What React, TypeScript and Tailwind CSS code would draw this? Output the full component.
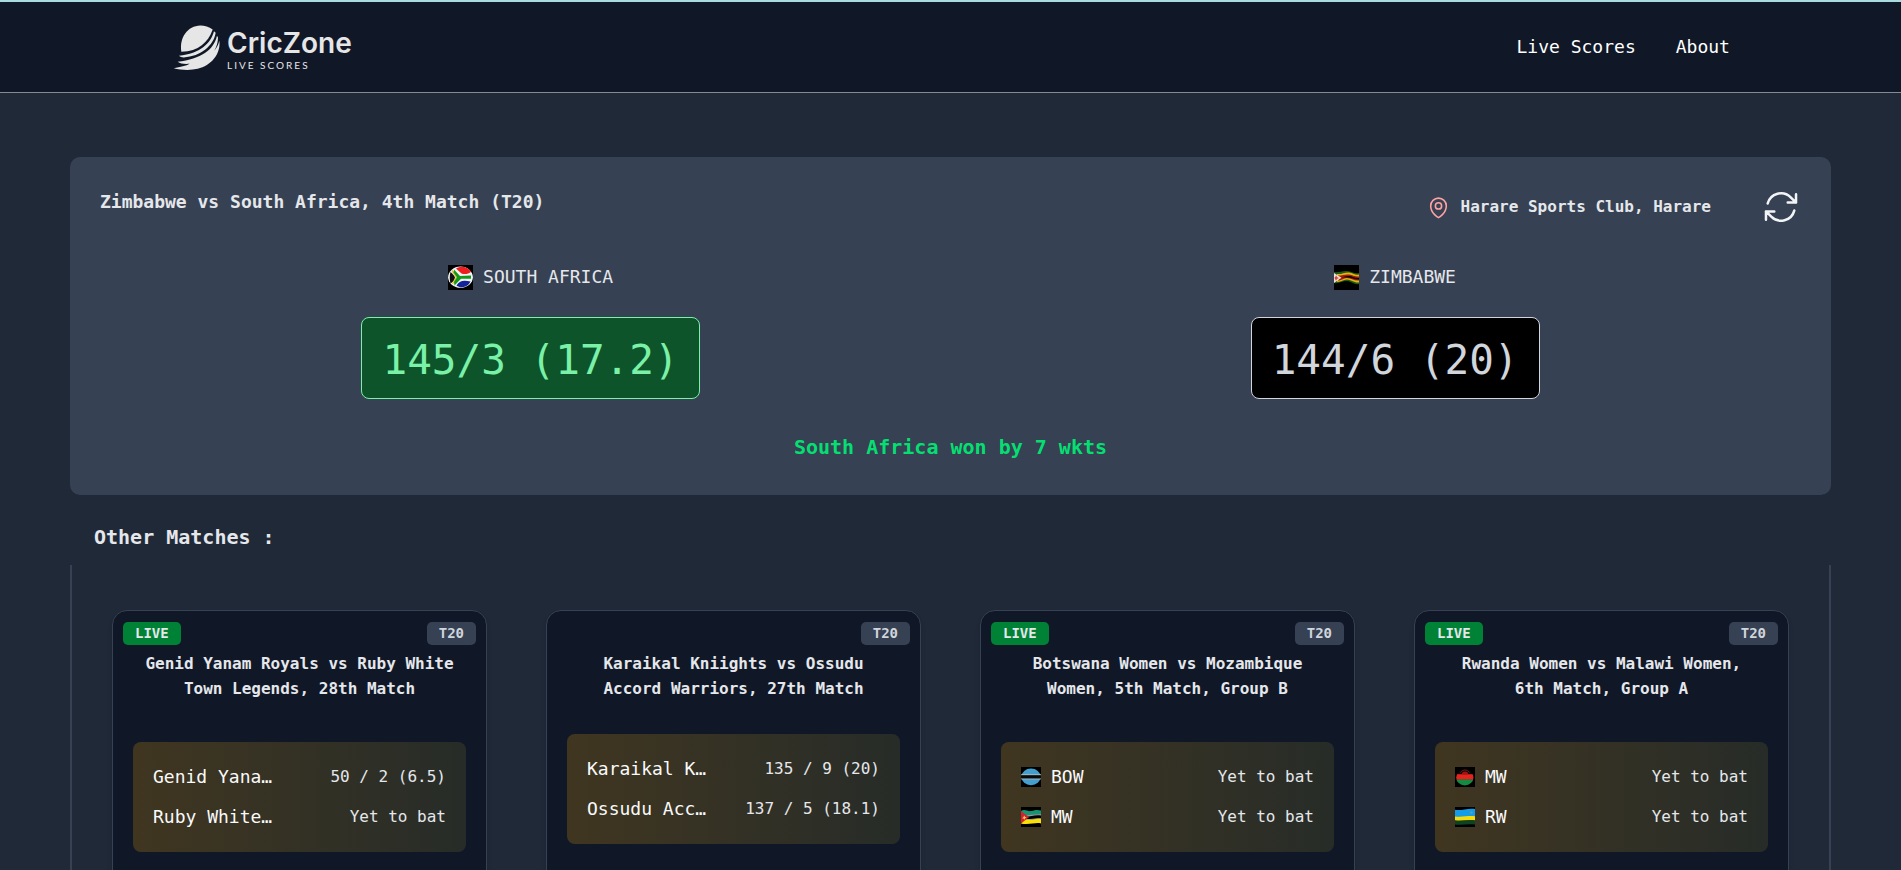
import type { ReactNode } from "react";

type FlagCode = "za" | "zw" | "bw" | "mz" | "mw" | "rw";

interface Side {
  name: string;
  score: string;
  flag?: FlagCode;
}

interface Match {
  title: string;
  format: string;
  live: boolean;
  sides: Side[];
}

const matches: Match[] = [
  {
    title: "Genid Yanam Royals vs Ruby White Town Legends, 28th Match",
    format: "T20",
    live: true,
    sides: [
      { name: "Genid Yana…", score: "50 / 2 (6.5)" },
      { name: "Ruby White…", score: "Yet to bat" },
    ],
  },
  {
    title: "Karaikal Kniights vs Ossudu Accord Warriors, 27th Match",
    format: "T20",
    live: false,
    sides: [
      { name: "Karaikal K…", score: "135 / 9 (20)" },
      { name: "Ossudu Acc…", score: "137 / 5 (18.1)" },
    ],
  },
  {
    title: "Botswana Women vs Mozambique Women, 5th Match, Group B",
    format: "T20",
    live: true,
    sides: [
      { name: "BOW", score: "Yet to bat", flag: "bw" },
      { name: "MW", score: "Yet to bat", flag: "mz" },
    ],
  },
  {
    title: "Rwanda Women vs Malawi Women, 6th Match, Group A",
    format: "T20",
    live: true,
    sides: [
      { name: "MW", score: "Yet to bat", flag: "mw" },
      { name: "RW", score: "Yet to bat", flag: "rw" },
    ],
  },
];

const flagArt: Record<FlagCode, ReactNode> = {
  za: (
    <>
      <clipPath id="za-ball">
        <ellipse cx="12.5" cy="12.2" rx="12.4" ry="10.6" />
      </clipPath>
      <g clipPath="url(#za-ball)">
        <rect width="25" height="25" fill="#f4f4f4" />
        <path d="M8 3.5 C13 0.5 20 1.5 23.5 6.5 C20 9.5 16 9.5 13.5 8.5 Z" fill="#f21d1d" />
        <path d="M8.5 20.5 C11 16 15 14.5 22.5 16.5 C20 22 13 24 8.5 20.5 Z" fill="#14239b" />
        <path d="M2.5 7 C5 9 6.5 11 7 12.5 C6.5 15 5 17 2.5 18.5 C1.5 15 1.5 10 2.5 7 Z" fill="#111" />
        <path d="M4 5.5 L8.5 12.3 L4.5 19" fill="none" stroke="#e8c220" strokeWidth="1.4" />
        <path d="M6 4.5 L12 11 L23 10.5 V13.8 L13 13.8 L6.5 20.5 L6 17 L9 12.3 L5.5 7.5 Z" fill="#139a1c" />
      </g>
    </>
  ),
  zw: (
    <>
      <path d="M0 7 C5 8 8 5.5 13 6 C18 6.5 20 9 25 8 V19 C20 20 18 16.5 13 16 C8 16 5 19 0 18 Z" fill="#1d5c17" />
      <path d="M3 9 C8 9.5 11 7 15 7.5 C19 8 21 10.5 25 9.5 V17.5 C20 18 17 14.5 13 14.5 C9 15 6 17 3 17 Z" fill="#e3b40c" />
      <path d="M4 10.5 C9 10.5 11 9 15 9.5 C19 10 21 12 25 11.5 V15.5 C20 16 17 13 13 13 C9 13.5 7 15.5 4 15.5 Z" fill="#a51a12" />
      <path d="M6 12 C10 12.5 12 10.5 16 11 C19 11.5 21 13.5 25 13 V14.5 C20 14.5 17 12.2 13 12.4 Z" fill="#0b0505" />
      <path d="M0 8 L7.5 12.8 L0 18 Z" fill="#eadfdb" />
      <path d="M0.5 13 L2.2 10.5 L3.2 12.3 L5 13 L3 14 L2 15.8 Z" fill="#d4483d" />
    </>
  ),
  bw: (
    <>
      <ellipse cx="12.5" cy="12.3" rx="12" ry="10.4" fill="#459fce" />
      <rect y="9.2" width="25" height="6.2" fill="#b9c6cc" />
      <rect y="10.2" width="25" height="4.2" fill="#0a0a0a" />
    </>
  ),
  mz: (
    <>
      <path d="M0 5 C5 2 8 6 13 5 C18 3.5 21 3 25 4.5 V10 C20 9 16 10 12 10.5 L0 10 Z" fill="#149474" />
      <path d="M2 9.5 C8 11.5 15 8.5 25 9.2 V10.6 C17 9.5 12 12 6 12 Z" fill="#9a9a9a" />
      <path d="M4 15.5 C12 17 18 13.5 25 15 V20.5 C18 19 12 22.5 0 20.8 Z" fill="#f8e008" />
      <path d="M4 14.8 C12 16 18 13 25 14.2 V15.2 C18 14.2 12 17 4 16.2 Z" fill="#b5b08a" />
      <path d="M0 5 L10 12.8 L0 20.5 Z" fill="#d6202b" />
      <path d="M4 10.5 L5 12.5 L7 13 L5.2 14.2 L4.6 16 L3.2 14.4 L1.4 14 L3 12.8 Z" fill="#f0d25a" />
    </>
  ),
  mw: (
    <>
      <clipPath id="mw-ball">
        <ellipse cx="12.3" cy="13" rx="10.8" ry="10" />
      </clipPath>
      <g clipPath="url(#mw-ball)">
        <rect width="25" height="10" fill="#0a0a0a" />
        <rect y="9" width="25" height="7" fill="#e8231d" />
        <rect y="15.6" width="25" height="9" fill="#158a43" />
      </g>
      <path d="M8.5 9.5 A4 4 0 0 1 16.5 9.5 Z" fill="#a01512" />
      <path d="M6.8 7 A6.5 6.5 0 0 1 18.2 7" fill="none" stroke="#7d1310" strokeWidth="1.2" />
    </>
  ),
  rw: (
    <>
      <path d="M0 3.5 C8 5 16 1 25 2.5 V12.5 C16 11.5 9 13.5 0 12.5 Z" fill="#149bea" />
      <path d="M0 11.8 C9 13 16 10.5 25 11.5 V17 C16 15.5 9 18 0 16.8 Z" fill="#f5dc0a" />
      <path d="M0 16.8 C9 18 16 15.5 25 17 V22 C16 20.5 9 23 0 21.8 Z" fill="#0c4422" />
      <circle cx="20.5" cy="7" r="1.6" fill="#4fa5b0" />
    </>
  ),
};

function Flag({ code, className }: { code: FlagCode; className: string }) {
  return (
    <svg viewBox="0 0 25 25" className={className} aria-hidden="true">
      <rect width="25" height="25" fill="#000" />
      {flagArt[code]}
    </svg>
  );
}

function Logo() {
  return (
    <a href="#" className="flex items-center gap-1.5 pl-0.5 text-[#e6e6e6]">
      <svg viewBox="68 68 144 140" className="h-[47px] w-12" fill="currentColor" aria-hidden="true">
        <path d="M93 151 C86 108 112 73 150 72 C163 72 176 76 187 84 C173 123 145 149 93 151 Z" />
        <path d="M191 89 C181 126 150 155 86 163 C90 166 94 168 100 168 C152 165 190 132 196 94 Z" />
        <path d="M200 103 C191 145 152 173 82 181 C90 187 102 188 118 187 C108 193 90 197 70 200 C92 206 120 207 142 202 C182 193 212 158 207 118 C204 129 200 138 192 148 C199 135 203 121 203 108 Z" />
      </svg>
      <span className="flex flex-col pt-1">
        <span className="font-['Inter',sans-serif] text-[28px] leading-8 font-semibold">CricZone</span>
        <span className="font-['Lato',sans-serif] text-[10px] leading-3 tracking-[2px]">LIVE SCORES</span>
      </span>
    </a>
  );
}

function MapPin() {
  return (
    <svg viewBox="0 0 24 24" className="size-[25px] text-red-300" fill="none" stroke="currentColor" strokeWidth="1.5" strokeLinecap="round" strokeLinejoin="round" aria-hidden="true">
      <path d="M15 10.5a3 3 0 1 1-6 0 3 3 0 0 1 6 0Z" />
      <path d="M19.5 10.5c0 7.142-7.5 11.25-7.5 11.25S4.5 17.642 4.5 10.5a7.5 7.5 0 1 1 15 0Z" />
    </svg>
  );
}

function RefreshIcon() {
  return (
    <svg viewBox="0 0 24 24" className="size-10" fill="none" stroke="currentColor" strokeWidth="1.5" strokeLinecap="round" strokeLinejoin="round" aria-hidden="true">
      <path d="M16.023 9.348h4.992v-.001M2.985 19.644v-4.992m0 0h4.992m-4.993 0 3.181 3.183a8.25 8.25 0 0 0 13.803-3.7M4.031 9.865a8.25 8.25 0 0 1 13.803-3.7l3.181 3.182m0-4.991v4.99" />
    </svg>
  );
}

function TeamScore({ name, score, flag, winner }: Side & { flag: FlagCode; winner: boolean }) {
  return (
    <div className="flex flex-col items-center gap-[26px]">
      <div className="flex items-center gap-2.5 text-lg leading-7">
        <Flag code={flag} className="size-[25px]" />
        <span>{name}</span>
      </div>
      <p
        className={
          winner
            ? "rounded-lg border border-green-300 bg-green-900 px-5 pt-3 pb-2 text-[41px] leading-[60px] text-green-300"
            : "rounded-lg border border-gray-300 bg-black px-5 pt-3 pb-2 text-[41px] leading-[60px] text-gray-300"
        }
      >
        {score}
      </p>
    </div>
  );
}

function MatchCard({ match }: { match: Match }) {
  return (
    <article className="relative rounded-[15px] border border-gray-700 bg-gray-900 px-5 pt-10 pb-16 shadow-md">
      {match.live && (
        <span className="absolute top-[11px] left-2.5 rounded-[5px] bg-green-700 px-3 text-sm leading-[23px] font-bold">LIVE</span>
      )}
      <span className="absolute top-[11px] right-2.5 rounded-[5px] bg-gray-700 px-3 text-sm leading-[23px] font-bold text-gray-300">
        {match.format}
      </span>
      <h3 className="px-2.5 text-center text-base leading-[25px] font-bold">{match.title}</h3>
      <ul
        className={
          match.live
            ? "mt-[41px] rounded-lg bg-linear-to-r from-[#403620] to-[#272c28] px-5 py-[15px]"
            : "mt-[33px] rounded-lg bg-linear-to-r from-[#403620] to-[#272c28] px-5 py-[15px]"
        }
      >
        {match.sides.map((side) => (
          <li key={side.name} className="flex h-10 items-center justify-between">
            <span className="flex items-center gap-2.5 text-lg text-gray-50">
              {side.flag && <Flag code={side.flag} className="size-5" />}
              {side.name}
            </span>
            <span className="text-base">{side.score}</span>
          </li>
        ))}
      </ul>
    </article>
  );
}

export default function App() {
  return (
    <div className="min-h-screen bg-[#202938] font-['DejaVu_Sans_Mono',monospace] text-gray-200">
      <header className="flex h-[93px] items-center justify-between border-t-2 border-b border-t-[#a9dbe0] border-b-[#858a93] bg-gray-900 px-[9%]">
        <Logo />
        <nav className="flex gap-10 text-lg text-white">
          <a href="#live">Live Scores</a>
          <a href="#about">About</a>
        </nav>
      </header>

      <main className="px-[70px] pt-16">
        <section className="rounded-[10px] bg-gray-700 px-4 pt-[30px] pb-8">
          <div className="flex items-start justify-between px-3.5">
            <h1 className="text-lg leading-[30px] font-bold">Zimbabwe vs South Africa, 4th Match (T20)</h1>
            <div className="flex items-center gap-[50px]">
              <p className="flex items-center gap-2.5 text-base font-bold">
                <MapPin />
                Harare Sports Club, Harare
              </p>
              <button type="button" aria-label="Refresh" className="text-gray-100">
                <RefreshIcon />
              </button>
            </div>
          </div>
          <div className="mt-9 flex justify-around">
            <TeamScore name="SOUTH AFRICA" score="145/3 (17.2)" flag="za" winner />
            <TeamScore name="ZIMBABWE" score="144/6 (20)" flag="zw" winner={false} />
          </div>
          <p className="mt-8 text-center text-xl leading-8 font-bold text-green-400">South Africa won by 7 wkts</p>
        </section>

        <h2 className="mt-[26px] mb-3 px-6 text-xl leading-8 font-bold">Other Matches :</h2>

        <section className="grid grid-cols-4 gap-[59px] border-x-2 border-gray-700 px-10 pt-[45px] pb-10">
          {matches.map((match) => (
            <MatchCard key={match.title} match={match} />
          ))}
        </section>
      </main>
    </div>
  );
}
